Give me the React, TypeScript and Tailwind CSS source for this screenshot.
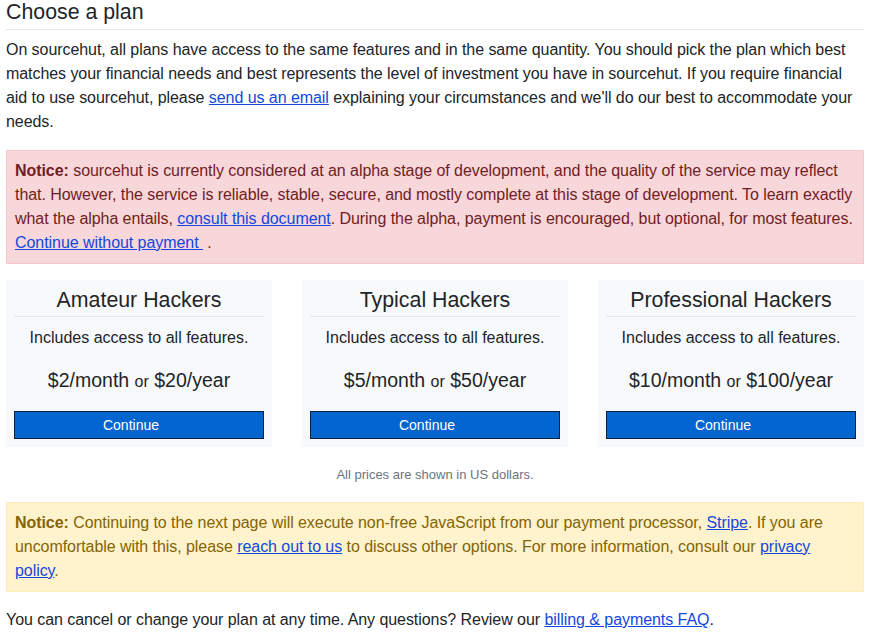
import React from "react";

const linkCls = "text-[#1347e0] underline";

function Card({ title, month, year }: { title: string; month: string; year: string }) {
  return (
    <div className="bg-[#f8f9fa] px-[8px] pt-[8px] pb-[8px] flex flex-col">
      <h3 className="text-[21.33px] leading-[24px] text-center text-[#212529] pb-[4px] border-b border-[#e3e6ea]">{title}</h3>
      <p className="mt-[9px] text-center leading-[24px]">Includes access to all features.</p>
      <p className="mt-[18px] text-center leading-[24px] text-[19.5px]">
        {month} <span className="text-[16px]">or</span> {year}
      </p>
      <button className="mt-[17px] h-[28px] w-full bg-[#0365cf] border border-[#0b223d] text-white text-[14px] leading-[26px] pr-[16px]">
        Continue
      </button>
    </div>
  );
}

export default function App() {
  return (
    <div className="pl-[6px] pr-[13px] text-[#212529] text-[16px] leading-[24px] tracking-[-0.06px] bg-white min-h-[639px]" style={{ fontFamily: '"Liberation Sans", Arial, sans-serif' }}>
      <h2 className="text-[21.33px] leading-[25px] pb-[4px] border-b border-[#e5e7ea] tracking-normal">Choose a plan</h2>
      <p className="mt-[8px]">
        On sourcehut, all plans have access to the same features and in the same quantity. You should pick the plan which best matches your financial needs and best represents the level of investment you have in sourcehut. If you require financial aid to use sourcehut, please{" "}
        <a href="#" className={linkCls}>send us an email</a> explaining your circumstances and we'll do our best to accommodate your needs.
      </p>
      <div className="mt-[16px] bg-[#f8d7da] border border-[#f5c6cb] text-[#721c24] p-[8px]">
        <strong>Notice:</strong> sourcehut is currently considered at an alpha stage of development, and the quality of the service may reflect that. However, the service is reliable, stable, secure, and mostly complete at this stage of development. To learn exactly what the alpha entails,{" "}
        <a href="#" className={linkCls}>consult this document</a>. During the alpha, payment is encouraged, but optional, for most features.
        <br />
        <a href="#" className={linkCls}>Continue without payment&nbsp;</a>{" "}.
      </div>
      <div className="mt-[16px] grid grid-cols-3 gap-[30px] tracking-normal">
        <Card title="Amateur Hackers" month="$2/month" year="$20/year" />
        <Card title="Typical Hackers" month="$5/month" year="$50/year" />
        <Card title="Professional Hackers" month="$10/month" year="$100/year" />
      </div>
      <p className="mt-[16px] text-center text-[13px] text-[#6c757d] tracking-normal">All prices are shown in US dollars.</p>
      <div className="mt-[15px] bg-[#fff3cd] border border-[#ffeeba] text-[#856404] p-[8px]">
        <strong>Notice:</strong> Continuing to the next page will execute non-free JavaScript from our payment processor,{" "}
        <a href="#" className={linkCls}>Stripe</a>. If you are uncomfortable with this, please{" "}
        <a href="#" className={linkCls}>reach out to us</a> to discuss other options. For more information, consult our{" "}
        <a href="#" className={linkCls}>privacy policy</a>.
      </div>
      <p className="mt-[16px]">
        You can cancel or change your plan at any time. Any questions? Review our{" "}
        <a href="#" className={linkCls}>billing &amp; payments FAQ</a>.
      </p>
    </div>
  );
}
